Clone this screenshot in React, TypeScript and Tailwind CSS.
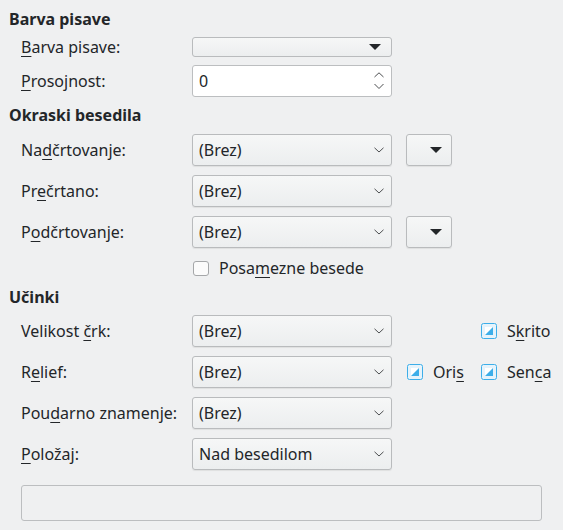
import React from "react";

const M = ({ children }: { children: React.ReactNode }) => (
  <span className="underline decoration-1 underline-offset-[3px]">{children}</span>
);

function Chevron() {
  return (
    <svg className="w-[10px] h-[6px]" viewBox="0 0 10 6" fill="none">
      <path d="M0.5 0.8 L5 5 L9.5 0.8" stroke="#4d4f51" strokeWidth="1" />
    </svg>
  );
}

function Triangle() {
  return (
    <svg className="w-[12px] h-[6px]" viewBox="0 0 12 6">
      <path d="M0 0 H12 L6 6 Z" fill="#232629" />
    </svg>
  );
}

function Combo({ value }: { value: string }) {
  return (
    <div className="w-[200px] h-[32px] flex items-center justify-between pl-[6px] pr-[7px] rounded-[3px] border border-[#b9bbbd] bg-gradient-to-b from-[#f6f7f7] to-[#eceeef] shadow-[0_1px_1px_rgba(0,0,0,0.07)]">
      <span>{value}</span>
      <Chevron />
    </div>
  );
}

function ArrowButton() {
  return (
    <div className="ml-[14px] w-[46px] h-[32px] flex items-center justify-end pr-[9px] rounded-[3px] border border-[#b9bbbd] bg-gradient-to-b from-[#f6f7f7] to-[#eceeef] shadow-[0_1px_1px_rgba(0,0,0,0.07)]">
      <Triangle />
    </div>
  );
}

function Tri() {
  return (
    <svg className="w-[16px] h-[16px] shrink-0" viewBox="0 0 16 16">
      <rect x="0.5" y="0.5" width="15" height="15" rx="2" fill="#e6f3fb" stroke="#3daee9" />
      <rect x="4" y="4" width="8" height="8" fill="#ffffff" />
      <path d="M12 4 V12 H4 Z" fill="#3daee9" />
    </svg>
  );
}

function Check({ children }: { children: React.ReactNode }) {
  return (
    <div className="flex items-center">
      <Tri />
      <span className="ml-[10px]">{children}</span>
    </div>
  );
}

function Row({
  label,
  children,
  mt,
}: {
  label: React.ReactNode;
  children: React.ReactNode;
  mt: string;
}) {
  return (
    <div className={`flex items-center ${mt}`}>
      <div className="w-[192px] pl-[21px] shrink-0 whitespace-nowrap">{label}</div>
      {children}
    </div>
  );
}

export default function App() {
  return (
    <div className="w-[563px] h-[530px] bg-[#eff0f1] text-[#232629] text-[16px] leading-[20px] font-['Noto_Sans',sans-serif] pt-[9px] overflow-hidden">
      <h2 className="pl-[9px] h-[20px] font-bold">Barva pisave</h2>

      <Row mt="mt-[8px]" label={<><M>B</M>arva pisave:</>}>
        <div className="w-[200px] h-[20px] flex items-center justify-end pr-[10px] rounded-[3px] border border-[#b9bbbd] bg-gradient-to-b from-[#f6f7f7] to-[#eceeef]">
          <Triangle />
        </div>
      </Row>

      <Row mt="mt-[8px]" label={<><M>P</M>rosojnost:</>}>
        <div className="w-[200px] h-[32px] flex items-center justify-between pl-[6px] pr-[7px] rounded-[3px] border border-[#bcbec0] bg-white">
          <span>0</span>
          <svg className="w-[10px] h-[18px]" viewBox="0 0 10 18" fill="none">
            <path d="M0.5 5 L5 0.8 L9.5 5" stroke="#4d4f51" strokeWidth="1" />
            <path d="M0.5 12 L5 16.5 L9.5 12" stroke="#4d4f51" strokeWidth="1" />
          </svg>
        </div>
      </Row>

      <h2 className="pl-[9px] h-[20px] font-bold mt-[8px]">Okraski besedila</h2>

      <Row mt="mt-[9px]" label={<>Na<M>d</M>črtovanje:</>}>
        <Combo value="(Brez)" />
        <ArrowButton />
      </Row>
      <Row mt="mt-[9px]" label={<>Pr<M>e</M>črtano:</>}>
        <Combo value="(Brez)" />
      </Row>
      <Row mt="mt-[9px]" label={<>P<M>o</M>dčrtovanje:</>}>
        <Combo value="(Brez)" />
        <ArrowButton />
      </Row>

      <div className="flex items-center mt-[10px] h-[20px] pl-[193px]">
        <div className="w-[16px] h-[15px] rounded-[3px] border border-[#a5a7a9] bg-[#fbfbfb]" />
        <span className="ml-[10px]">
          Posa<M>m</M>ezne besede
        </span>
      </div>

      <h2 className="pl-[9px] h-[20px] font-bold mt-[9px]">Učinki</h2>

      <Row mt="mt-[8px]" label={<>Velikost <M>č</M>rk:</>}>
        <Combo value="(Brez)" />
        <div className="ml-[89px]">
          <Check>
            S<M>k</M>rito
          </Check>
        </div>
      </Row>
      <Row mt="mt-[9px]" label={<>R<M>e</M>lief:</>}>
        <Combo value="(Brez)" />
        <div className="ml-[15px] w-[74px]">
          <Check>
            Ori<M>s</M>
          </Check>
        </div>
        <Check>
          Sen<M>c</M>a
        </Check>
      </Row>
      <Row mt="mt-[9px]" label={<>Pou<M>d</M>arno znamenje:</>}>
        <Combo value="(Brez)" />
      </Row>
      <Row mt="mt-[9px]" label={<><M>P</M>oložaj:</>}>
        <Combo value="Nad besedilom" />
      </Row>

      <div className="mt-[15px] ml-[21px] w-[521px] h-[36px] rounded-[3px] border border-[#bcbec0]" />
    </div>
  );
}
